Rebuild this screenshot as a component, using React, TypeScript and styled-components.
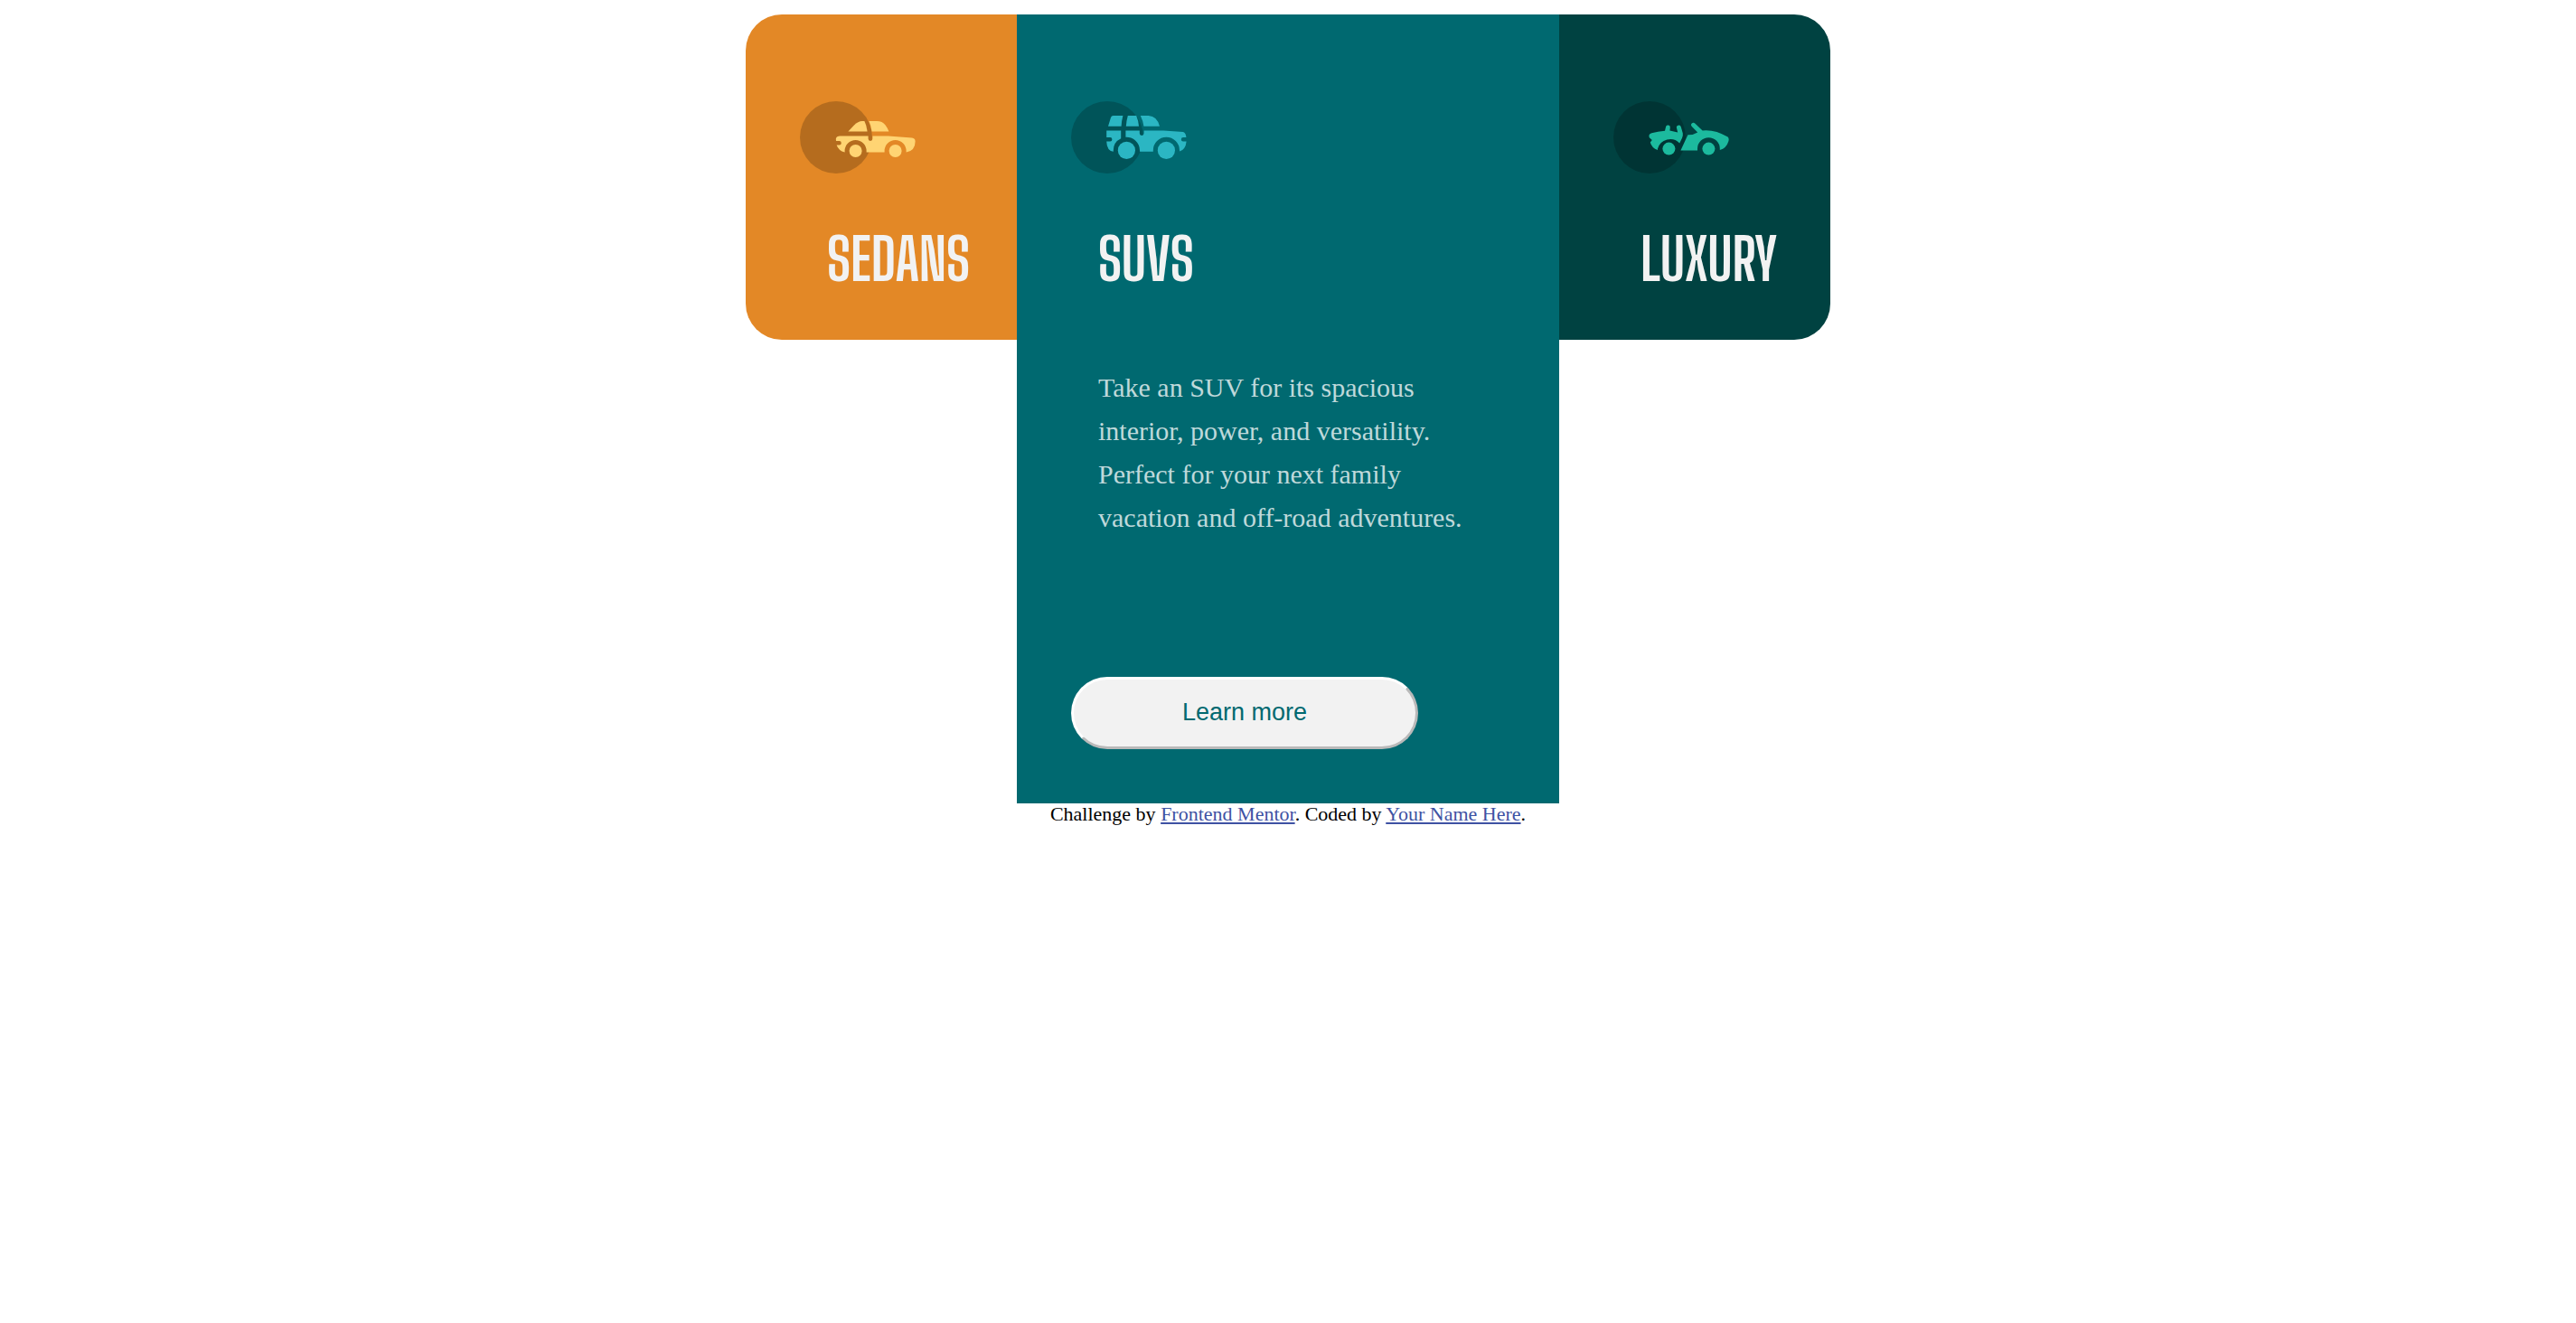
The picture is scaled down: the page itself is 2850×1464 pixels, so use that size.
import React from "react";
import styled, { createGlobalStyle } from "styled-components";

const GlobalStyle = createGlobalStyle`
  *, *::before, *::after { box-sizing: border-box; }
  body {
    margin: 0;
    background: #ffffff;
    font-family: "Liberation Serif", "Times New Roman", serif;
  }
`;

const Page = styled.div`
  padding-top: 16px;
`;

const Cards = styled.main`
  display: grid;
  grid-template-columns: minmax(0, 1fr) minmax(0, 2fr) minmax(0, 1fr);
  align-items: start;
  max-width: 1200px;
  margin: 0 auto;
`;

const Card = styled.article<{ $color: string; $radius?: string }>`
  display: flex;
  flex-direction: column;
  align-items: flex-start;
  padding: 96px 60px 60px;
  background: ${(p) => p.$color};
  border-radius: ${(p) => p.$radius ?? "0"};
`;

const CarIcon = styled.svg`
  display: block;
  width: 128px;
  height: 80px;
`;

const Title = styled.h2`
  margin: 66px 0 0;
  padding-left: 30px;
  color: #f2f2f2;
  font-family: "Big Shoulders Display", "Liberation Sans Narrow", "Liberation Sans", sans-serif;
  font-size: 64px;
  font-weight: 700;
  line-height: 58px;
  text-transform: uppercase;
`;

const Description = styled.p`
  margin: 89px 0 0;
  padding: 0 30px;
  color: rgba(255, 255, 255, 0.75);
  font-size: 30px;
  line-height: 48px;
`;

const LearnMore = styled.button`
  width: 80%;
  height: 80px;
  margin-top: 152px;
  padding: 0 0 2px;
  border: 3px solid;
  border-color: #ffffff #b9b9b9 #b9b9b9 #ffffff;
  border-radius: 40px;
  background: #f2f2f2;
  color: #006970;
  font-family: "Liberation Sans", Arial, sans-serif;
  font-size: 27px;
  cursor: pointer;
`;

const Attribution = styled.footer`
  color: #000000;
  font-size: 22px;
  line-height: 24px;
  text-align: center;
`;

const Link = styled.a`
  color: #3e52a3;
`;

const Backdrop = () => <circle cx="20" cy="20" r="20" fill="#000000" opacity="0.2" />;

const SedanIcon = () => (
  <CarIcon viewBox="0 0 64 40" aria-hidden="true">
    <Backdrop />
    <g fill="#ffd473">
      <path d="M26.7 16.8 L30 13.3 Q32.2 11 34.4 11 H35.7 Q37 13.6 37.3 16.8Z" />
      <path d="M38.2 11 H42.5 Q45.6 11 47.3 13.2 Q48.6 14.9 49.2 16.8 H39.8 Q39.4 13.6 38.2 11Z" />
      <path d="M22 19.2 H37.8 V20.8 A1.2 1.2 0 0 0 40.2 20.8 V19.2 H48.8 L62 20.3 Q63.8 20.5 63.8 22.2 Q63.8 27.4 58.8 28.2 V27.5 A6 6 0 0 0 46.8 27.5 V28.3 H36.8 V27.5 A6 6 0 0 0 24.8 27.5 V28.2 Q21.4 27.4 20.3 24.2 H21.8 A1.1 1.1 0 0 0 21.8 22 H20 Q19.4 19.4 22 19.2Z" />
      <circle cx="30.8" cy="27.5" r="3.5" />
      <circle cx="52.8" cy="27.5" r="3.5" />
    </g>
  </CarIcon>
);

const SuvIcon = () => (
  <CarIcon viewBox="0 0 64 40" aria-hidden="true">
    <Backdrop />
    <g fill="#2bb6c3">
      <path d="M23.4 8 H28.7 Q27.9 11 27.8 13.9 H20.5 L22 9 Q22.3 8 23.4 8Z" />
      <path d="M31.4 8 H36.1 Q37.3 10.8 37.5 13.9 H30.4 Q30.6 10.9 31.4 8Z" />
      <path d="M38.4 8 H42.8 Q47.6 8.2 49 13.9 H40.2 Q39.8 10.8 38.4 8Z" />
      <path d="M19.6 16.3 H27.6 V20.6 A7.3 7.3 0 0 0 23.4 27.2 V27.9 Q19.8 27.4 19.6 22.2 H21.6 A1.1 1.1 0 0 0 21.6 20 H19.6Z" />
      <path d="M30.2 16.3 H37.9 V17.8 A1.2 1.2 0 0 0 40.3 17.8 V16.3 H51.2 L62 17 Q63.5 17.4 63.7 20 H62 A1.1 1.1 0 0 0 62 22.2 H63.8 Q63.4 26.6 60 27.8 V27.2 A7.3 7.3 0 0 0 45.4 27.2 V27.9 H38 V27.2 A7.3 7.3 0 0 0 30.2 19.9Z" />
      <circle cx="30.7" cy="27.2" r="4.8" />
      <circle cx="52.7" cy="27.2" r="4.8" />
    </g>
  </CarIcon>
);

const LuxuryIcon = () => (
  <CarIcon viewBox="0 0 64 40" aria-hidden="true">
    <Backdrop />
    <g fill="#1cba9e">
      <path d="M21.2 17.6 Q24.5 16.8 28.5 16.4 L29 14.3 A1.2 1.2 0 0 1 31.4 14.6 L31.2 16.3 L35.6 17.2 L35 14.9 A1.2 1.2 0 0 1 37.4 14.2 L38.4 17.8 Q38.6 19.2 38 20.4 L36.6 23.2 A7.2 7.2 0 0 0 24.5 26.3 V27 Q21.2 26 20.4 22.8 L21.4 21.5 L19.9 20.1 Q19.2 18.2 21.2 17.6Z" />
      <path d="M41.2 18.6 Q44.2 18.7 46.6 17.2 L43.4 14 A1.2 1.2 0 0 1 45.1 12.3 L49.3 16.2 Q56.2 15.5 63.3 19.8 Q64.2 20.6 63.6 22.4 Q62.5 26 58.9 27 V26.3 A6.2 6.2 0 0 0 46.5 26.3 V27.3 H37.2Z" />
      <circle cx="30.7" cy="26.3" r="3.5" />
      <circle cx="52.7" cy="26.3" r="3.5" />
    </g>
  </CarIcon>
);

export default function App() {
  return (
    <Page>
      <GlobalStyle />
      <Cards>
        <Card $color="#e38826" $radius="40px 0 0 40px">
          <SedanIcon />
          <Title>Sedans</Title>
        </Card>
        <Card $color="#006970">
          <SuvIcon />
          <Title>SUVs</Title>
          <Description>
            Take an SUV for its spacious interior, power, and versatility. Perfect for your next
            family vacation and off-road adventures.
          </Description>
          <LearnMore type="button">Learn more</LearnMore>
        </Card>
        <Card $color="#004241" $radius="0 40px 40px 0">
          <LuxuryIcon />
          <Title>Luxury</Title>
        </Card>
      </Cards>
      <Attribution>
        Challenge by <Link href="#frontend-mentor">Frontend Mentor</Link>. Coded by{" "}
        <Link href="#author">Your Name Here</Link>.
      </Attribution>
    </Page>
  );
}
